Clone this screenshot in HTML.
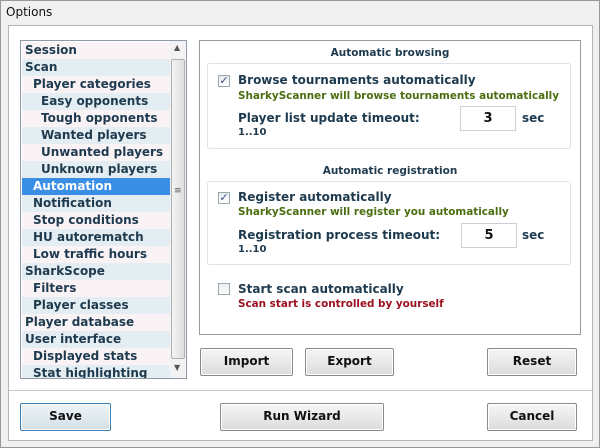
<!DOCTYPE html>
<html><head><style>
*{margin:0;padding:0;box-sizing:border-box}
body{width:600px;height:448px;background:#fff;font-family:"DejaVu Sans","Liberation Sans",sans-serif;position:relative;overflow:hidden;color:#1e3a4e}
.a{position:absolute;white-space:nowrap}
.b{font-weight:bold}
.btn{position:absolute;border:1px solid #8a8a8a;border-radius:2px;background:linear-gradient(#f6f6f6,#dcdcdc);font-weight:bold;font-size:12px;color:#111;text-align:center;line-height:25px;box-shadow:inset 0 0 0 1px #fff}
.row{position:absolute;left:1px;width:148px;height:17px;font-weight:bold;font-size:12px;line-height:17px;white-space:nowrap}
.cb{position:absolute;width:12px;height:12px;border:1px solid #9aa;background:linear-gradient(#e8ecf0,#fff);font-size:11px;line-height:10px;text-align:center;color:#3a4a8a;font-weight:bold}
.sub{position:absolute;left:207px;width:364px;border:1px solid #dde3ea;border-radius:3px}
.inp{position:absolute;width:56px;height:25px;border:1px solid #c8d0d8;background:#fff;font-weight:bold;font-size:13px;text-align:center;line-height:23px;color:#111}
.g{font-size:10.4px}
</style></head><body>
<div class="a" style="left:0;top:0;width:600px;height:448px;border:1px solid #999;background:#f0f0f0"></div>
<div class="a" style="left:6px;top:5px;font-size:12px;color:#111">Options</div>
<div class="a" style="left:8px;top:25px;width:585px;height:416px;border:1px solid #b5b5b5;background:#fff"></div>
<div class="a" style="left:9px;top:390px;width:583px;height:1px;background:#c8c8c8"></div>

<div class="a" style="left:20px;top:40px;width:167px;height:339px;border:1px solid #8e9aa6;background:#fff;overflow:hidden">
<div class="row" style="top:1px;background:#faf3f6;padding-left:3px">Session</div>
<div class="row" style="top:18px;background:#e3edf2;padding-left:3px">Scan</div>
<div class="row" style="top:35px;background:#faf3f6;padding-left:11px">Player categories</div>
<div class="row" style="top:52px;background:#e3edf2;padding-left:19px">Easy opponents</div>
<div class="row" style="top:69px;background:#faf3f6;padding-left:19px">Tough opponents</div>
<div class="row" style="top:86px;background:#e3edf2;padding-left:19px">Wanted players</div>
<div class="row" style="top:103px;background:#faf3f6;padding-left:19px">Unwanted players</div>
<div class="row" style="top:120px;background:#e3edf2;padding-left:19px">Unknown players</div>
<div class="row" style="top:137px;background:#3a8ee6;color:#fff;padding-left:11px">Automation</div>
<div class="row" style="top:154px;background:#e3edf2;padding-left:11px">Notification</div>
<div class="row" style="top:171px;background:#faf3f6;padding-left:11px">Stop conditions</div>
<div class="row" style="top:188px;background:#e3edf2;padding-left:11px">HU autorematch</div>
<div class="row" style="top:205px;background:#faf3f6;padding-left:11px">Low traffic hours</div>
<div class="row" style="top:222px;background:#e3edf2;padding-left:3px">SharkScope</div>
<div class="row" style="top:239px;background:#faf3f6;padding-left:11px">Filters</div>
<div class="row" style="top:256px;background:#e3edf2;padding-left:11px">Player classes</div>
<div class="row" style="top:273px;background:#faf3f6;padding-left:3px">Player database</div>
<div class="row" style="top:290px;background:#e3edf2;padding-left:3px">User interface</div>
<div class="row" style="top:307px;background:#faf3f6;padding-left:11px">Displayed stats</div>
<div class="row" style="top:324px;background:#e3edf2;padding-left:11px">Stat highlighting</div>
<div class="a" style="left:149px;top:0;width:16px;height:337px;background:#f2f2f2"></div>
<div class="a" style="left:150px;top:18px;width:14px;height:300px;border:1px solid #b0b0b0;border-radius:2px;background:linear-gradient(90deg,#f4f4f4,#dedede)"></div>
<div class="a" style="left:153px;top:2px;font-size:8px;color:#555">▲</div>
<div class="a" style="left:153px;top:322px;font-size:8px;color:#555">▼</div>
<div class="a" style="left:153px;top:145px;font-size:9px;color:#555">≡</div>
</div>

<div class="a" style="left:199px;top:40px;width:382px;height:295px;border:1px solid #9a9a9a"></div>
<div class="a b" style="left:199px;width:382px;top:47px;text-align:center;font-size:10.5px">Automatic browsing</div>
<div class="sub" style="top:63px;height:86px"></div>
<div class="cb" style="left:218px;top:75px">✓</div>
<div class="a b" style="left:238px;top:73px;font-size:12px">Browse tournaments automatically</div>
<div class="a b g" style="left:238px;top:90px;color:#4a6e10">SharkyScanner will browse tournaments automatically</div>
<div class="a b" style="left:238px;top:111px;font-size:12px">Player list update timeout:</div>
<div class="a b" style="left:238px;top:127px;font-size:10px">1..10</div>
<div class="inp" style="left:460px;top:106px">3</div>
<div class="a b" style="left:522px;top:111px;font-size:12px">sec</div>

<div class="a b" style="left:199px;width:382px;top:165px;text-align:center;font-size:10.5px">Automatic registration</div>
<div class="sub" style="top:181px;height:84px"></div>
<div class="cb" style="left:218px;top:192px">✓</div>
<div class="a b" style="left:238px;top:190px;font-size:12px">Register automatically</div>
<div class="a b g" style="left:238px;top:206px;color:#4a6e10">SharkyScanner will register you automatically</div>
<div class="a b" style="left:238px;top:228px;font-size:12px">Registration process timeout:</div>
<div class="a b" style="left:238px;top:244px;font-size:10px">1..10</div>
<div class="inp" style="left:461px;top:223px">5</div>
<div class="a b" style="left:522px;top:228px;font-size:12px">sec</div>

<div class="cb" style="left:218px;top:283px"></div>
<div class="a b" style="left:238px;top:282px;font-size:12px">Start scan automatically</div>
<div class="a b g" style="left:238px;top:298px;color:#9a1020">Scan start is controlled by yourself</div>

<div class="btn" style="left:200px;top:348px;width:93px;height:28px">Import</div>
<div class="btn" style="left:305px;top:348px;width:89px;height:28px">Export</div>
<div class="btn" style="left:487px;top:348px;width:90px;height:28px">Reset</div>
<div class="btn" style="left:20px;top:403px;width:91px;height:28px;border-color:#3c7fb1;background:linear-gradient(#eef4f8,#d4dfe6)">Save</div>
<div class="btn" style="left:220px;top:403px;width:164px;height:28px">Run Wizard</div>
<div class="btn" style="left:487px;top:403px;width:90px;height:28px">Cancel</div>
</body></html>
